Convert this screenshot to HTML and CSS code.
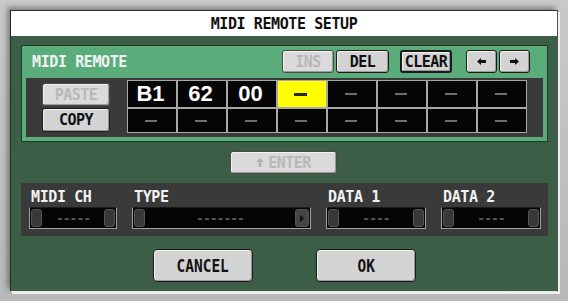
FILE: index.html
```html
<!DOCTYPE html>
<html lang="en">
<head>
    <meta charset="UTF-8">
    <meta name="viewport" content="width=device-width, initial-scale=1.0">
    <title>MIDI Remote Setup</title>
    <link rel="stylesheet" href="styles.css">
</head>
<body>
    <div class="frame">
        <div class="window">
            <div class="title">MIDI REMOTE SETUP</div>
            <div class="content">
                <div class="remote">
                    <div class="remote-head">
                        <span class="remote-label">MIDI REMOTE</span>
                        <button class="btn btn-ins" disabled>INS</button>
                        <button class="btn btn-del">DEL</button>
                        <button class="btn btn-clear">CLEAR</button>
                        <button class="btn btn-arrow btn-left">
                            <svg width="9" height="7" viewBox="0 0 9 7"><path d="M0 3.5 L4 0 L4 2 L9 2 L9 5 L4 5 L4 7 Z" fill="#111"/></svg>
                        </button>
                        <button class="btn btn-arrow">
                            <svg width="9" height="7" viewBox="0 0 9 7"><path d="M9 3.5 L5 0 L5 2 L0 2 L0 5 L5 5 L5 7 Z" fill="#111"/></svg>
                        </button>
                    </div>
                    <div class="remote-data">
                        <div class="clip">
                            <button class="btn btn-paste" disabled>PASTE</button>
                            <button class="btn btn-copy">COPY</button>
                        </div>
                        <div class="bytes">
                            <div class="cell">B1</div>
                            <div class="cell">62</div>
                            <div class="cell">00</div>
                            <div class="cell current"><span class="dash"></span></div>
                            <div class="cell"><span class="dash"></span></div>
                            <div class="cell"><span class="dash"></span></div>
                            <div class="cell"><span class="dash"></span></div>
                            <div class="cell"><span class="dash"></span></div>
                            <div class="cell"><span class="dash"></span></div>
                            <div class="cell"><span class="dash"></span></div>
                            <div class="cell"><span class="dash"></span></div>
                            <div class="cell"><span class="dash"></span></div>
                            <div class="cell"><span class="dash"></span></div>
                            <div class="cell"><span class="dash"></span></div>
                            <div class="cell"><span class="dash"></span></div>
                            <div class="cell"><span class="dash"></span></div>
                        </div>
                    </div>
                </div>

                <div class="enter-row">
                    <button class="btn btn-enter" disabled>
                        <svg width="8" height="9" viewBox="0 0 8 9"><path d="M4 0 L8 4 L5.5 4 L5.5 9 L2.5 9 L2.5 4 L0 4 Z" fill="#b4b4b4"/></svg>
                        ENTER
                    </button>
                </div>

                <div class="params">
                    <div class="param">
                        <div class="param-label">MIDI CH</div>
                        <div class="field">
                            <span class="knob"></span>
                            <span class="field-value">-----</span>
                            <span class="knob"></span>
                        </div>
                    </div>
                    <div class="param">
                        <div class="param-label">TYPE</div>
                        <div class="field">
                            <span class="knob"></span>
                            <span class="field-value">-------</span>
                            <span class="knob knob-menu">
                                <svg width="4" height="7" viewBox="0 0 4 7"><path d="M0 0 L4 3.5 L0 7 Z" fill="#111"/></svg>
                            </span>
                        </div>
                    </div>
                    <div class="param">
                        <div class="param-label">DATA 1</div>
                        <div class="field">
                            <span class="knob"></span>
                            <span class="field-value">----</span>
                            <span class="knob"></span>
                        </div>
                    </div>
                    <div class="param">
                        <div class="param-label">DATA 2</div>
                        <div class="field">
                            <span class="knob"></span>
                            <span class="field-value">----</span>
                            <span class="knob"></span>
                        </div>
                    </div>
                </div>

                <div class="actions">
                    <button class="btn btn-action"><span>CANCEL</span></button>
                    <button class="btn btn-action"><span>OK</span></button>
                </div>
            </div>
        </div>
    </div>
</body>
</html>
```

FILE: styles.css
```css
* {
    box-sizing: border-box;
}
body {
    margin: 0;
    background-color: #c2c2c2;
    font-family: "DejaVu Sans Mono", monospace;
}
.frame {
    width: 568px;
    height: 301px;
    padding: 10px 10px 9px 10px;
    background: linear-gradient(#c9c9c9, #b8b8b8);
}
.window {
    height: 100%;
    display: flex;
    flex-direction: column;
    border: 1px solid #2a2a2a;
    border-right-color: #555;
    border-bottom-color: #e8e8e8;
    box-shadow: -3px -3px 5px rgba(0,0,0,0.35), 2px 2px 0 #f4f4f4;
}
.title {
    height: 25px;
    background-color: #fff;
    text-align: center;
    font-weight: bold;
    font-size: 15px;
    line-height: 26px;
    color: #111;
    letter-spacing: -0.4px;
}
.content {
    flex: 1;
    background-color: #3c5e46;
    padding: 9px 9px 0 10px;
}
.btn {
    font-family: "DejaVu Sans Mono", monospace;
    font-weight: bold;
    font-size: 15px;
    letter-spacing: -0.5px;
    color: #111;
    background-color: #d3d3d3;
    border: 1px solid #1a1a1a;
    border-radius: 3px;
    box-shadow: inset 1px 1px 0 #f2f2f2, inset -1px -1px 0 #9a9a9a;
    padding: 0;
    height: 23px;
    display: flex;
    align-items: center;
    justify-content: center;
    gap: 4px;
}
.btn:disabled {
    color: #b8b8b8;
    background-color: #dadada;
    border-color: #4a4a4a;
}
.remote {
    height: 97px;
    background-color: #5aad7a;
    border: 1px solid #1f3a28;
    padding: 4px;
    display: flex;
    flex-direction: column;
    gap: 5px;
}
.remote-head {
    height: 23px;
    display: flex;
    align-items: center;
}
.remote-label {
    font-weight: bold;
    font-size: 15px;
    letter-spacing: -0.4px;
    color: #f2f2f2;
    padding-left: 6px;
    width: 256px;
}
.btn-ins {
    width: 52px;
}
.btn-del {
    width: 53px;
    margin-left: 2px;
}
.btn-clear {
    width: 52px;
    margin-left: 11px;
    border-width: 2px;
}
.btn-arrow {
    width: 31px;
}
.btn-left {
    margin-left: 14px;
    margin-right: 2px;
}
.remote-data {
    flex: 1;
    background-color: #3a3a3a;
    display: flex;
    align-items: flex-start;
    padding: 2px 0 0 16px;
}
.clip {
    width: 68px;
    margin-top: 3px;
    display: flex;
    flex-direction: column;
    gap: 2px;
}
.btn-copy {
    height: 24px;
}
.bytes {
    margin-left: 17px;
    width: 400px;
    height: 53px;
    display: grid;
    grid-template-columns: repeat(8, 1fr);
    grid-template-rows: 1fr 1fr;
    gap: 2px;
    padding: 1px;
    background-color: #a8a8a8;
}
.cell {
    background-color: #050505;
    color: #fff;
    font-family: "Liberation Sans", Arial, sans-serif;
    font-weight: bold;
    font-size: 22px;
    display: flex;
    align-items: center;
    justify-content: center;
    padding-right: 3px;
}
.dash {
    width: 12px;
    height: 2px;
    background-color: #6e6e6e;
}
.cell.current {
    background-color: #ffff00;
}
.cell.current .dash {
    width: 13px;
    height: 3px;
    background-color: #2a2a00;
}
.enter-row {
    display: flex;
    padding-left: 209px;
    margin-top: 9px;
}
.btn-enter {
    width: 107px;
}
.params {
    margin-top: 9px;
    height: 53px;
    background-color: #3a3a3a;
    display: grid;
    grid-template-columns: 88px 179px 100px 100px;
    column-gap: 15px;
    padding: 5px 0 0 8px;
}
.param-label {
    font-weight: bold;
    font-size: 15px;
    letter-spacing: -0.4px;
    color: #f2f2f2;
    height: 19px;
    padding-left: 2px;
}
.field {
    height: 22px;
    background-color: #050505;
    border: 1px solid #a0a0a0;
    border-top-color: #1a1a1a;
    display: flex;
    align-items: center;
    justify-content: space-between;
    padding: 0 1px;
}
.knob {
    width: 11px;
    height: 18px;
    background-color: #383838;
    border: 1px solid #555;
    border-radius: 3px;
    display: flex;
    align-items: center;
    justify-content: center;
}
.knob-menu {
    width: 14px;
    background-color: #444;
}
.field-value {
    color: #5a5a5a;
    font-size: 13px;
    font-weight: bold;
    letter-spacing: -1px;
}
.actions {
    display: flex;
    justify-content: center;
    gap: 63px;
    margin-top: 13px;
}
.btn-action {
    width: 100px;
    height: 33px;
    font-size: 17px;
    letter-spacing: 0;
    border-radius: 4px;
}
.btn-action span {
    display: inline-block;
    transform: scaleX(0.85);
}
```
